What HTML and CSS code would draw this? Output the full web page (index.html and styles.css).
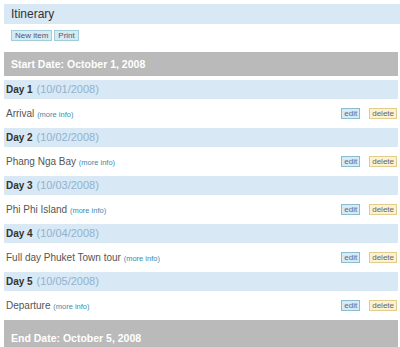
FILE: index.html
```html
<!DOCTYPE html>
<html lang="en">
<head>
  <meta charset="UTF-8">
  <title>Itinerary</title>
  <link rel="stylesheet" href="styles.css">
</head>
<body>

<div class="page">
  <div class="page-title">Itinerary</div>
  <div class="toolbar">
    <button class="tool-btn">New item</button>
    <button class="tool-btn">Print</button>
  </div>

  <div class="date-bar">Start Date: October 1, 2008</div>

  <div class="days">
    <div class="day-head"><strong>Day 1</strong> <span class="day-date">(10/01/2008)</span></div>
    <div class="item">
      <div class="item-name">Arrival <a class="more" href="#">(more info)</a></div>
      <div class="item-actions"><button class="btn-edit">edit</button><button class="btn-delete">delete</button></div>
    </div>

    <div class="day-head"><strong>Day 2</strong> <span class="day-date">(10/02/2008)</span></div>
    <div class="item">
      <div class="item-name">Phang Nga Bay <a class="more" href="#">(more info)</a></div>
      <div class="item-actions"><button class="btn-edit">edit</button><button class="btn-delete">delete</button></div>
    </div>

    <div class="day-head"><strong>Day 3</strong> <span class="day-date">(10/03/2008)</span></div>
    <div class="item">
      <div class="item-name">Phi Phi Island <a class="more" href="#">(more info)</a></div>
      <div class="item-actions"><button class="btn-edit">edit</button><button class="btn-delete">delete</button></div>
    </div>

    <div class="day-head"><strong>Day 4</strong> <span class="day-date">(10/04/2008)</span></div>
    <div class="item">
      <div class="item-name">Full day Phuket Town tour <a class="more" href="#">(more info)</a></div>
      <div class="item-actions"><button class="btn-edit">edit</button><button class="btn-delete">delete</button></div>
    </div>

    <div class="day-head"><strong>Day 5</strong> <span class="day-date">(10/05/2008)</span></div>
    <div class="item">
      <div class="item-name">Departure <a class="more" href="#">(more info)</a></div>
      <div class="item-actions"><button class="btn-edit">edit</button><button class="btn-delete">delete</button></div>
    </div>
  </div>

  <div class="date-bar end-bar">End Date: October 5, 2008</div>
</div>

</body>
</html>
```

FILE: styles.css
```css
* { margin: 0; padding: 0; box-sizing: border-box; }
body {
  font-family: 'Liberation Sans', Arial, sans-serif;
  background-color: #fff;
  color: #444;
  overflow: hidden;
}
.page {
  padding: 4px 2px 0 4px;
}
.page-title {
  height: 20px;
  line-height: 20px;
  margin-right: -2px;
  padding-left: 7px;
  background-color: #d8e8f5;
  font-size: 12px;
  color: #333;
}
.toolbar {
  display: flex;
  gap: 2px;
  padding: 6px 0 0 7px;
}
.tool-btn {
  height: 11px;
  padding: 0 3px;
  font-family: inherit;
  font-size: 8px;
  line-height: 9px;
  color: #557;
  background-color: #d3ebf3;
  border: 1px solid #a4cddc;
}
.date-bar {
  margin-top: 11px;
  height: 24px;
  line-height: 24px;
  padding-left: 7px;
  background-color: #bababa;
  color: #fff;
  font-size: 10.5px;
  font-weight: bold;
}
.end-bar {
  margin-top: 0;
  height: 40px;
  padding-top: 6px;
}
.days {
  margin-top: 4px;
}
.day-head {
  height: 19px;
  line-height: 19px;
  padding-left: 2px;
  background-color: #d8e8f5;
  font-size: 10px;
  color: #333;
}
.day-date {
  margin-left: 1px;
  font-size: 11px;
  color: #8fb2d0;
}
.item {
  height: 29px;
  display: flex;
  align-items: center;
  justify-content: space-between;
  padding: 0 1px 0 2px;
}
.item-name {
  font-size: 10px;
  color: #555;
}
.more {
  font-size: 7.5px;
  color: #3d8bab;
  text-decoration: none;
}
.item-actions {
  display: flex;
  gap: 9px;
}
.btn-edit, .btn-delete {
  height: 11px;
  padding: 0 2px;
  font-family: inherit;
  font-size: 8px;
  line-height: 9px;
  color: #667;
}
.btn-edit {
  background-color: #d6eaf3;
  border: 1px solid #8dbbd0;
}
.btn-delete {
  background-color: #fcf1d2;
  border: 1px solid #e2cc8a;
}
```
